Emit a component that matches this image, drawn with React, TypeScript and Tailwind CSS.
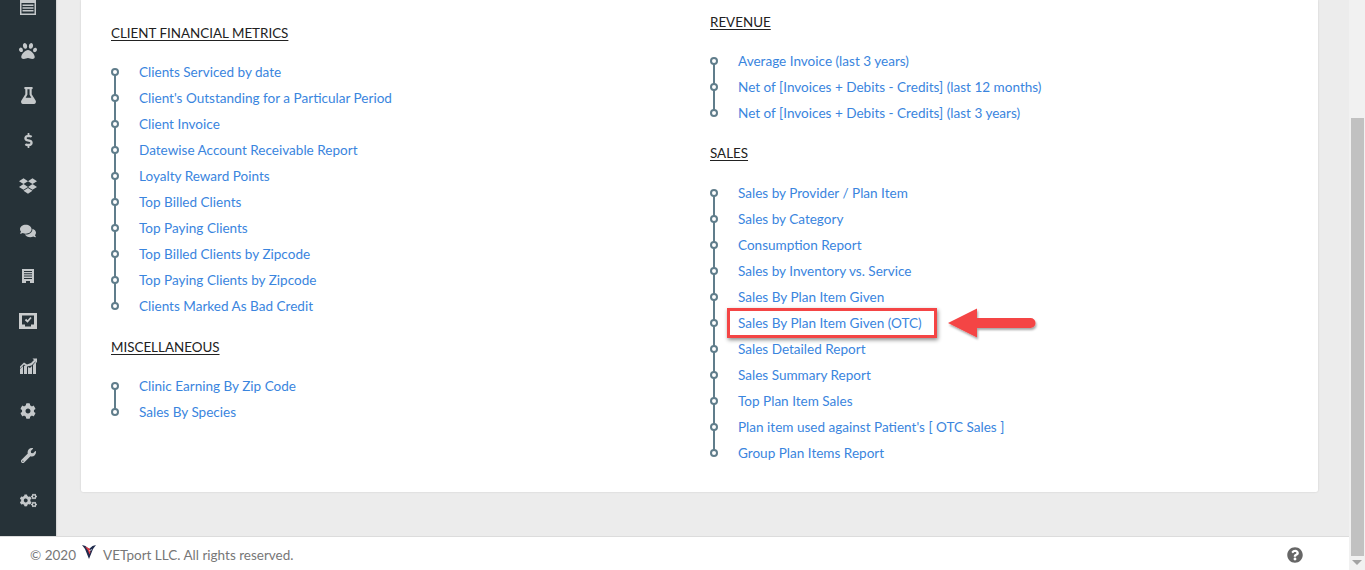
import React from "react";
import { FaPaw, FaFlask, FaDollarSign, FaDropbox, FaComments, FaCog, FaWrench, FaCogs, FaQuestionCircle } from "react-icons/fa";

const font = "font-['Lato','Open_Sans',sans-serif]";

function Calendar() {
  return (
    <svg width="16" height="18" viewBox="0 0 16 18" fill="#c4c8ca">
      <path fillRule="evenodd" d="M0 2h3V0h2v2h6V0h2v2h3v16H0zM1.500 6v10.500h13V6z" />
      <path d="M2.500 7.500h11v1.500h-11zM2.500 10.300h11v1.500h-11zM2.500 13.100h11v1.500h-11z" />
    </svg>
  );
}
function Building() {
  return (
    <svg width="12" height="14" viewBox="0 0 12 14" fill="#c4c8ca">
      <path d="M0 0h12v14H8v-2H4v2H0zM2 2v1h8V2zM2 4.300v1h8v-1zM2 6.600v1h8v-1zM2 8.900v1h8v-1z" fillRule="evenodd" />
    </svg>
  );
}
function CheckBox() {
  return (
    <svg width="18" height="16" viewBox="0 0 18 16">
      <rect width="18" height="16" fill="#c9cccd" />
      <path d="M3 2.500h12v9h-3v2H6v-2H3z" fill="#263238" />
      <path d="M6.500 6.500l2 2L12 4.500" stroke="#c9cccd" strokeWidth="1.800" fill="none" />
    </svg>
  );
}
function Chart() {
  return (
    <svg width="17" height="16" viewBox="0 0 17 16" fill="#c4c8ca">
      <path d="M0 16v-5l3-3v8zM4 16V8l2-1 1 1v8zM8 16V9l2 1 2-2v8zM13 16V7l3-3.500V16z" />
      <path d="M0 8.500l4-4 3 2 4-1.500 3-3-1.500-1.500H17V5l-1.500-1.500L11.500 7.500 7 8.500l-3-2-4 4z" />
    </svg>
  );
}
function Logo() {
  return (
    <svg width="14" height="14" viewBox="0 0 14 14">
      <path d="M0 0l3.500 1L7 4l3.500-3L14 0l-3 4-4 10-4-10z" fill="#1f2a4d" />
      <path d="M3 1.500l4.500 2 1 3.500-1 2.500L6 5.500z" fill="#e23a45" />
      <path d="M7 6l3-1.500" stroke="#fff" strokeWidth="0.700" />
    </svg>
  );
}

const icons = [
  <Calendar />,
  <FaPaw size={18} />,
  <FaFlask size={17} />,
  <FaDollarSign size={15} />,
  <FaDropbox size={18} />,
  <FaComments size={16} />,
  <Building />,
  <CheckBox />,
  <Chart />,
  <FaCog size={16} />,
  <FaWrench size={15} />,
  <FaCogs size={17} />,
];

function Section({ title, items, className = "", listClass = "mt-[16px]", highlight }: { title: string; items: string[]; className?: string; listClass?: string; highlight?: string }) {
  return (
    <section className={className}>
      <h3 className="text-[13.4px] leading-5 text-[#222] underline underline-offset-2 font-normal">{title}</h3>
      <ul className={`${listClass} relative`}>
        <span className="absolute left-[3px] top-[13px] bottom-[13px] w-[2px] bg-[#607d8b]" />
        {items.map((t) => (
          <li key={t} className="relative h-[26px] flex items-center pl-7 text-[13.55px] text-[#3a85de]">
            <span className="absolute left-0 top-[9px] w-2 h-2 rounded-full border-2 border-[#607d8b] bg-white" />
            <span>{t}</span>
            {t === highlight && (
              <>
                <span className="absolute left-[17px] -top-[2px] w-[210px] h-[30px] border-[3px] border-[#f44545] shadow-[1px_2px_4px_rgba(0,0,0,0.45)]" />
                <svg className="absolute left-[236px] -top-[4px]" width="94" height="40" viewBox="0 0 94 40">
                  <defs>
                    <filter id="s" x="-10%" y="-20%" width="120%" height="150%">
                      <feDropShadow dx="1" dy="2" stdDeviation="1.200" floodColor="#000" floodOpacity="0.35" />
                    </filter>
                  </defs>
                  <path d="M2 17L31 2.500V12h53.500a5 5 0 0 1 0 10H31v9.500z" fill="#f44545" filter="url(#s)" />
                </svg>
              </>
            )}
          </li>
        ))}
      </ul>
    </section>
  );
}

export default function App() {
  return (
    <div className={`flex h-[570px] w-[1365px] overflow-hidden bg-white ${font}`}>
      <div className="flex-1 flex flex-col min-w-0">
        <div className="flex h-[537px] bg-[#ececec] border-b border-[#dcdcdc]">
          <aside className="w-[56px] bg-[#263238] flex flex-col items-center text-[#c4c8ca] shadow-[1px_0_1px_#d8d8d8]">
            {icons.map((ic, i) => (
              <div key={i} className={`h-[45px] shrink-0 flex items-center justify-center ${i === 0 ? "-mt-[17px]" : ""}`}>
                {ic}
              </div>
            ))}
          </aside>
          <main className="ml-[25px] w-[1237px] h-[492px] bg-white rounded-b-[2px] shadow-[0_0_2px_rgba(0,0,0,0.15)] grid grid-cols-[599px_1fr]">
            <div className="pl-[30px] pt-[23px]">
              <Section
                title="CLIENT FINANCIAL METRICS"
                items={[
                  "Clients Serviced by date",
                  "Client's Outstanding for a Particular Period",
                  "Client Invoice",
                  "Datewise Account Receivable Report",
                  "Loyalty Reward Points",
                  "Top Billed Clients",
                  "Top Paying Clients",
                  "Top Billed Clients by Zipcode",
                  "Top Paying Clients by Zipcode",
                  "Clients Marked As Bad Credit",
                ]}
              />
              <Section title="MISCELLANEOUS" className="mt-[18px]" items={["Clinic Earning By Zip Code", "Sales By Species"]} />
            </div>
            <div className="pl-[30px] pt-[12px]">
              <Section
                title="REVENUE"
                listClass="mt-[16px]"
                items={[
                  "Average Invoice (last 3 years)",
                  "Net of [Invoices + Debits - Credits] (last 12 months)",
                  "Net of [Invoices + Debits - Credits] (last 3 years)",
                ]}
              />
              <Section
                title="SALES"
                className="mt-[17px]"
                listClass="mt-[17px]"
                highlight="Sales By Plan Item Given (OTC)"
                items={[
                  "Sales by Provider / Plan Item",
                  "Sales by Category",
                  "Consumption Report",
                  "Sales by Inventory vs. Service",
                  "Sales By Plan Item Given",
                  "Sales By Plan Item Given (OTC)",
                  "Sales Detailed Report",
                  "Sales Summary Report",
                  "Top Plan Item Sales",
                  "Plan item used against Patient's [ OTC Sales ]",
                  "Group Plan Items Report",
                ]}
              />
            </div>
          </main>
        </div>
        <footer className="flex-1 flex items-center pl-[30px] pr-[46px] pt-[3px] text-[13.5px] text-[#777]">
          <span>© 2020</span>
          <span className="ml-[6px] mr-[7px] flex -mt-[7px]"><Logo /></span>
          <span>VETport LLC. All rights reserved.</span>
          <FaQuestionCircle size={16} className="ml-auto text-[#666]" />
        </footer>
      </div>
      <div className="w-4 bg-[#f1f1f1] flex flex-col items-center pt-[118px]">
        <div className="w-[13px] h-[438px] bg-[#c1c1c1]" />
        <div className="mt-[4px] w-0 h-0 border-x-[5px] border-x-transparent border-t-[5px] border-t-[#a3a3a3]" />
      </div>
    </div>
  );
}
